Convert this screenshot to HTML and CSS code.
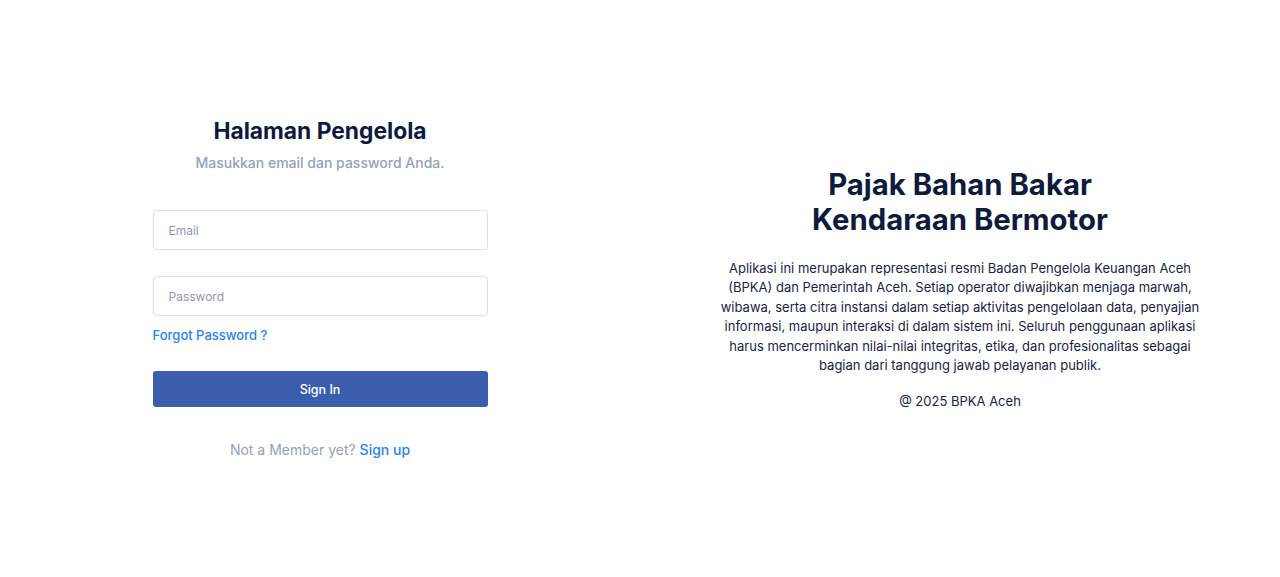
FILE: index.html
```html
<!DOCTYPE html>
<html lang="id">
<head>
<meta charset="utf-8">
<title>Halaman Pengelola</title>
<link rel="stylesheet" href="styles.css">
</head>
<body>
<main class="page">
  <section class="half left">
    <div class="form-box">
      <h1 class="title">Halaman Pengelola</h1>
      <p class="subtitle">Masukkan email dan password Anda.</p>
      <form class="form">
        <input class="field" type="email" placeholder="Email">
        <input class="field field-pw" type="password" placeholder="Password">
        <a class="forgot" href="#">Forgot Password ?</a>
        <button class="btn" type="button">Sign In</button>
      </form>
      <p class="signup">Not a Member yet? <a href="#">Sign up</a></p>
    </div>
  </section>
  <section class="half right">
    <div class="info">
      <h2 class="info-title">Pajak Bahan Bakar<br>Kendaraan Bermotor</h2>
      <p class="info-text">Aplikasi ini merupakan representasi resmi Badan Pengelola Keuangan Aceh (BPKA) dan Pemerintah Aceh. Setiap operator diwajibkan menjaga marwah, wibawa, serta citra instansi dalam setiap aktivitas pengelolaan data, penyajian informasi, maupun interaksi di dalam sistem ini. Seluruh penggunaan aplikasi harus mencerminkan nilai-nilai integritas, etika, dan profesionalitas sebagai bagian dari tanggung jawab pelayanan publik.</p>
      <p class="copy">@ 2025 BPKA Aceh</p>
    </div>
  </section>
</main>
</body>
</html>
```
FILE: styles.css
```css
* { box-sizing: border-box; }
html, body { margin: 0; padding: 0; background: #fff; }
body { font-family: Inter, "Noto Sans", sans-serif; color: #0f1a3d; }
.page { display: flex; width: 1280px; height: 577px; }
.half { flex: 1; display: flex; align-items: center; justify-content: center; }
.form-box { width: 335px; text-align: center; }
.title { margin: 0; font-size: 22.8px; font-weight: 700; line-height: 28px; color: #0f1a3d; }
.subtitle { margin: 8px 0 0; font-size: 14px; font-weight: 500; line-height: 20px; color: #97a0b8; }
.form { display: flex; flex-direction: column; align-items: stretch; margin-top: 37px; text-align: left; }
.field { height: 40px; border: 1px solid #dcdfe8; border-radius: 4px; padding: 0 15px; font-family: Inter, sans-serif; font-size: 12px; color: #0f1a3d; outline: none; }
.field::placeholder { color: #8e97ad; }
.field-pw { margin-top: 26px; }
.forgot { margin-top: 10px; font-size: 13px; font-weight: 500; line-height: 18px; color: #2a82ea; text-decoration: none; }
.btn { margin-top: 27px; height: 36px; border: none; border-radius: 3px; background: #3a5dae; color: #fff; font-family: Inter, sans-serif; font-size: 12.5px; font-weight: 500; }
.signup { margin: 33px 0 0; font-size: 14px; line-height: 20px; color: #97a0b8; }
.signup a { color: #2a82ea; text-decoration: none; font-weight: 500; }
.info { width: 490px; text-align: center; padding-top: 2px; padding-bottom: 2px; }
.info-title { margin: 0; font-size: 29.3px; font-weight: 700; line-height: 35px; color: #0f1a3d; }
.info-text { margin: 22px 0 0; font-size: 13px; line-height: 19.5px; color: #1a2342; }
.copy { margin: 16px 0 0; font-size: 13px; line-height: 19px; color: #1a2342; }
```
